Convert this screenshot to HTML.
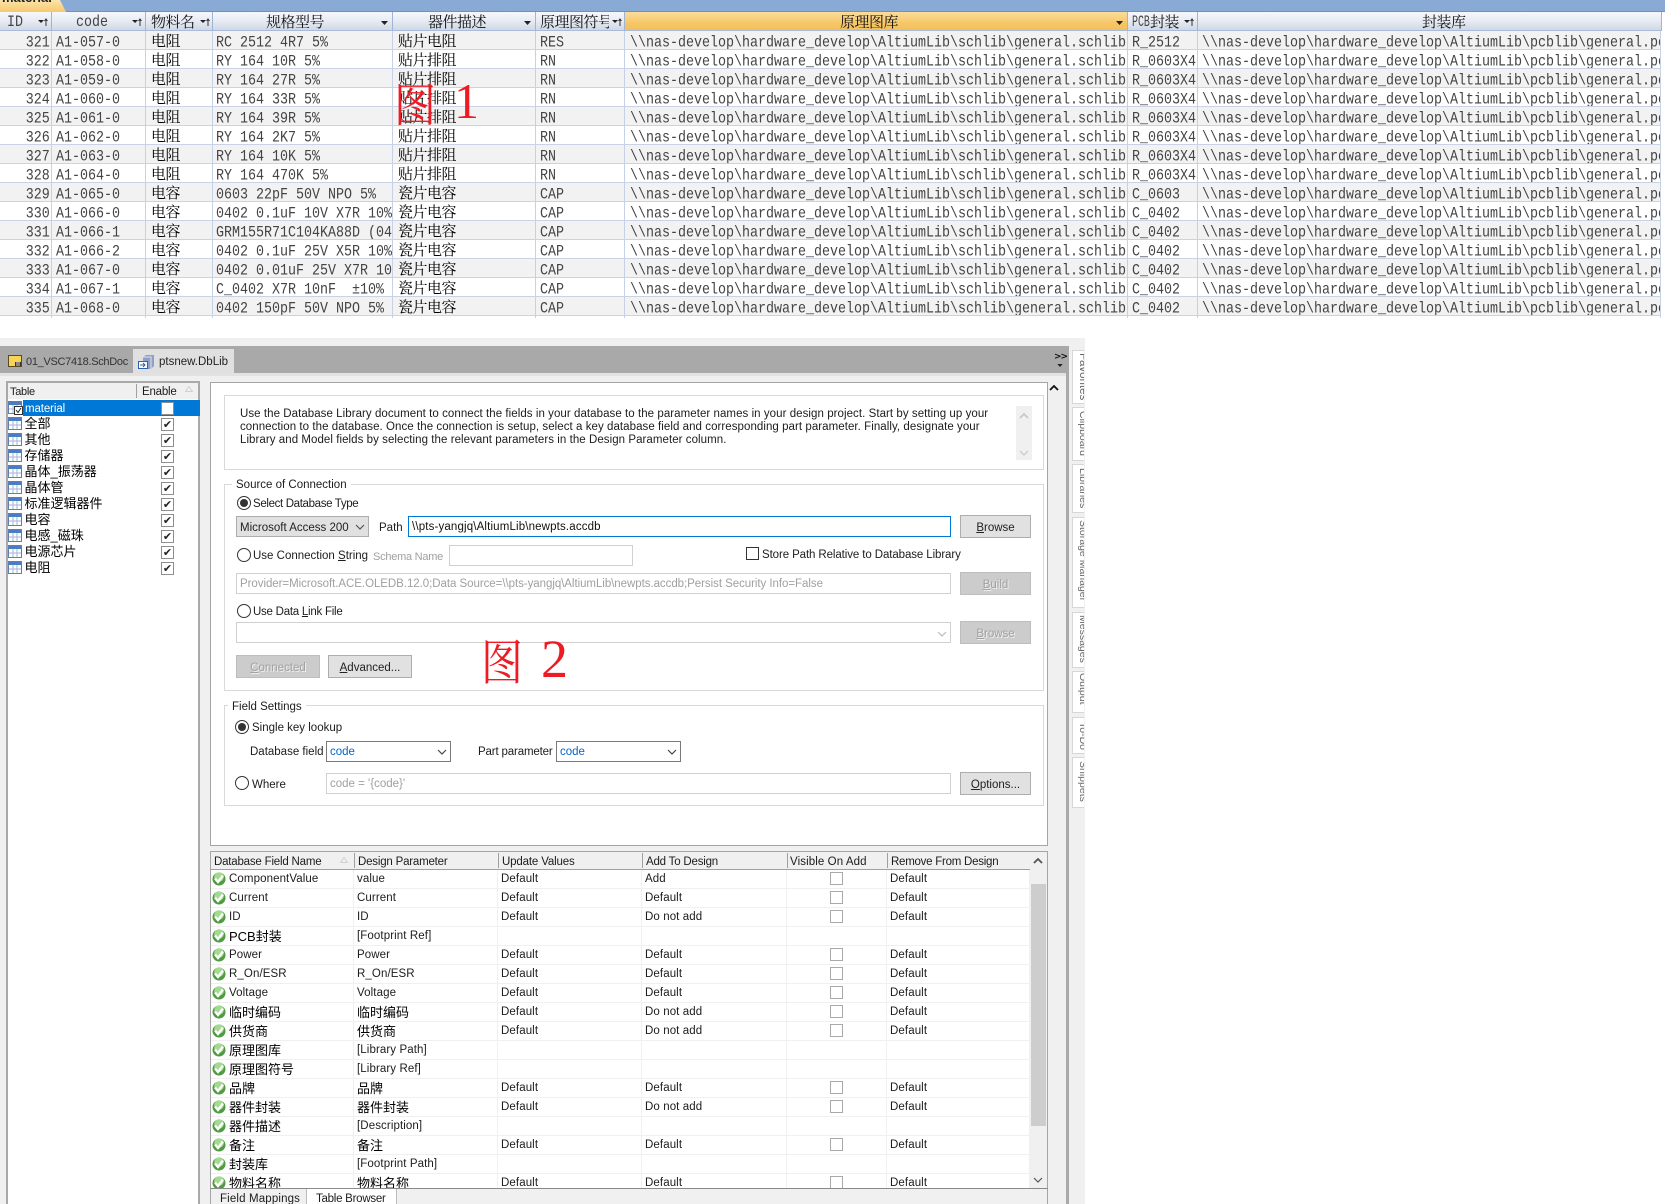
<!DOCTYPE html>
<html><head><meta charset="utf-8"><title>material / ptsnew.DbLib</title>
<style>
html{margin:0;padding:0;background:#fff;overflow:hidden;width:1665px;height:1204px}
body{margin:0;padding:0;background:#fff;position:relative;width:1665px;height:1204px;overflow:hidden;font:11.5px/14px "Liberation Sans","Noto Sans CJK SC",sans-serif;color:#1c1c1c}
div,svg,i{position:absolute}
.t{white-space:pre;margin-top:1px}
.g{color:#a0a0a0}
.cj{font-size:13px;color:#000;margin-top:0}
/* access table */
#top{position:absolute;left:0;top:31px;width:1661px;table-layout:fixed;border-collapse:separate;border-spacing:0;font:16px/19px "Liberation Mono",monospace;color:#444}
#top td{height:18px;padding:0;border-right:1px solid #c5d1e5;border-bottom:1px solid #c9d3e5;overflow:hidden;white-space:pre;line-height:18px}
#top tr:nth-child(odd) td{background:#f2f2f2}
#top tr:nth-child(even) td{background:#fff}
#top tr.z td{background:#fff;height:2px;border-bottom:0;font-size:0;line-height:0}
#top b{display:inline-block;font-weight:normal;transform:translateY(2.5px) scaleX(.8333);transform-origin:0 50%}
#top td.c{font:15px/16px "Noto Serif CJK SC","Liberation Serif",serif;letter-spacing:-.5px;color:#000;height:16px;padding-top:2px}
#top td:nth-child(1){text-align:right;padding-right:1px}
#top td:nth-child(1) b{transform-origin:100% 50%}
#top td:nth-child(2){padding-left:4px}
#top td:nth-child(3){padding-left:5px}
#top td:nth-child(4){padding-left:3px}
#top td:nth-child(5){padding-left:5px}
#top td:nth-child(6){padding-left:4px}
#top td:nth-child(7){padding-left:5px}
#top td:nth-child(8){padding-left:4px}
#top td:nth-child(9){padding-left:4px}
.h{top:12px;height:18px;background:linear-gradient(#f5f7fb,#e9edf4 45%,#cfd8e6);border-right:1px solid #9fb4d6;border-bottom:1px solid #a9bbd8;overflow:hidden}
.h.o{background:linear-gradient(#fbdc9b,#f6c768 60%,#f4bf58)}
.hm{top:12px;font:16px/19px "Liberation Mono",monospace;color:#444;transform:translateY(1px) scaleX(.8333);transform-origin:0 50%;white-space:pre}
.hc{top:12px;font:15px/19px "Noto Serif CJK SC",serif;letter-spacing:-.5px;color:#111;white-space:pre;overflow:hidden}
/* dialog */
.btn{box-sizing:border-box;background:#e1e1e1;border:1px solid #adadad;text-align:center;line-height:25px;color:#222}
.btn.d{background:#cccccc;border-color:#bdbdbd;color:#a2a2a2;text-shadow:1px 1px 0 #eee}
.in{box-sizing:border-box;background:#fff;border:1px solid #d0d0d0;height:21px;line-height:21px;padding-left:3px;white-space:pre;overflow:hidden}
.grp{box-sizing:border-box;border:1px solid #d9d9d9;background:#fff}
.radio{box-sizing:border-box;width:14px;height:14px;border:1px solid #333;border-radius:50%;background:#fff}
.radio.on::after{content:"";position:absolute;left:2px;top:2px;width:8px;height:8px;border-radius:50%;background:#333}
.vt{left:1072px;width:12px;box-sizing:border-box;background:#fff;border:1px solid #d6d6d6;border-right:0;overflow:hidden}
.vt span{position:absolute;left:3px;white-space:pre;writing-mode:vertical-rl;line-height:14px;color:#666;font-size:10.5px}
.ck{left:161px;width:13px;height:13px;box-sizing:border-box;border:1px solid #8f8f8f;background:#fff;font:bold 11px/11px "DejaVu Sans",sans-serif;text-align:center;color:#222;overflow:hidden}
#grid{position:absolute;left:211px;top:870px;width:819px;table-layout:fixed;border-collapse:separate;border-spacing:0}
#grid td{position:relative;height:18px;padding:0 0 0 3px;border-right:1px solid #f0f0f0;border-bottom:1px solid #f0f0f0;white-space:pre;overflow:hidden;line-height:18px;letter-spacing:.1px}
#grid td:first-child{padding-left:18px}
#grid td.k{font-size:13px;letter-spacing:0;color:#000;line-height:15px}
#grid svg{left:1px;top:2px}
#grid td i{left:43px;top:2px;width:13px;height:13px;box-sizing:border-box;border:1px solid #a9a9a9;background:#fff}
.hs{top:853px;height:15px;width:1px;background:#a0a0a0}
</style></head><body>
<svg width="0" height="0" style="left:0;top:0"><defs>
<symbol id="tb" viewBox="0 0 14 13"><rect x=".5" y=".5" width="13" height="12" fill="#fff" stroke="#5b7fb5"/><rect x="1" y="1" width="12" height="3" fill="#4f7cc0"/><path d="M5 4v8M9 4v8M1 8h12" stroke="#9db7da" fill="none"/></symbol>
<symbol id="ok" viewBox="0 0 14 14"><circle cx="7" cy="7" r="6.5" fill="#4f9c40"/><circle cx="7" cy="5" r="4.800" fill="#a4d992"/><path d="M3 6.500l3 3.500 5-6.500" stroke="#fff" stroke-width="2.400" fill="none"/></symbol>
<symbol id="fl" viewBox="0 0 10 9"><path d="M0 2h6L3 5z" fill="#222"/><path d="M8 1v7" stroke="#333"/><path d="M6.5 3L8 1l1.5 2" stroke="#333" fill="none"/></symbol>
<symbol id="dn" viewBox="0 0 7 4"><path d="M0 0h7L3.500 4z" fill="#222"/></symbol>
<symbol id="ch" viewBox="0 0 10 6"><path d="M1 1l4 4 4-4" stroke="currentColor" fill="none" stroke-width="1.200"/></symbol>
<symbol id="up" viewBox="0 0 10 6"><path d="M1 5l4-4 4 4" stroke="currentColor" fill="none" stroke-width="1.800"/></symbol>
</defs></svg>

<!-- Access datasheet -->
<div style="left:0;top:0;width:1665px;height:12px;background:#8aaad6;border-bottom:1px solid #6f8fc5;box-sizing:border-box"></div>
<div style="left:0;top:0;width:66px;height:12px;background:linear-gradient(#fbe3a8,#f7c970);clip-path:polygon(0 0,60px 0,66px 12px,0 12px)"></div>
<div style="left:2px;top:-10px;font:bold 13px/16px 'Liberation Sans',sans-serif;color:#222">material</div>

<div class="h" style="left:0;width:51px"></div>
<div class="h" style="left:52px;width:93px"></div>
<div class="h" style="left:146px;width:66px"></div>
<div class="h" style="left:213px;width:179px"></div>
<div class="h" style="left:393px;width:142px"></div>
<div class="h" style="left:536px;width:88px"></div>
<div class="h o" style="left:625px;width:502px"></div>
<div class="h" style="left:1128px;width:69px"></div>
<div class="h" style="left:1198px;width:463px"></div>
<div class="hm" style="left:7px">ID</div>
<div class="hm" style="left:76px">code</div>
<div class="hc" style="left:151px">物料名</div>
<div class="hc" style="left:266px">规格型号</div>
<div class="hc" style="left:428px">器件描述</div>
<div class="hc" style="left:540px;width:69px">原理图符号</div>
<div class="hc" style="left:840px">原理图库</div>
<div class="hm" style="left:1132px;transform:translateY(1px) scaleX(.62)">PCB</div>
<div class="hc" style="left:1150px;width:33px">封装</div>
<div class="hc" style="left:1422px">封装库</div>
<svg style="left:38px;top:18px" width="10" height="9"><use href="#fl"/></svg>
<svg style="left:132px;top:18px" width="10" height="9"><use href="#fl"/></svg>
<svg style="left:200px;top:18px" width="10" height="9"><use href="#fl"/></svg>
<svg style="left:381px;top:21px" width="7" height="4"><use href="#dn"/></svg>
<svg style="left:524px;top:21px" width="7" height="4"><use href="#dn"/></svg>
<svg style="left:612px;top:18px" width="10" height="9"><use href="#fl"/></svg>
<svg style="left:1116px;top:21px" width="7" height="4"><use href="#dn"/></svg>
<svg style="left:1184px;top:18px" width="10" height="9"><use href="#fl"/></svg>

<table id="top"><colgroup><col style="width:52px"><col style="width:94px"><col style="width:67px"><col style="width:180px"><col style="width:143px"><col style="width:89px"><col style="width:503px"><col style="width:70px"><col style="width:463px"></colgroup>
<tr><td><b>321</b></td><td><b>A1-057-0</b></td><td class="c">电阻</td><td><b>RC 2512 4R7 5%</b></td><td class="c">贴片电阻</td><td><b>RES</b></td><td><b>\\nas-develop\hardware_develop\AltiumLib\schlib\general.schlib</b></td><td><b>R_2512</b></td><td><b>\\nas-develop\hardware_develop\AltiumLib\pcblib\general.pcblib</b></td></tr>
<tr><td><b>322</b></td><td><b>A1-058-0</b></td><td class="c">电阻</td><td><b>RY 164 10R 5%</b></td><td class="c">贴片排阻</td><td><b>RN</b></td><td><b>\\nas-develop\hardware_develop\AltiumLib\schlib\general.schlib</b></td><td><b>R_0603X4</b></td><td><b>\\nas-develop\hardware_develop\AltiumLib\pcblib\general.pcblib</b></td></tr>
<tr><td><b>323</b></td><td><b>A1-059-0</b></td><td class="c">电阻</td><td><b>RY 164 27R 5%</b></td><td class="c">贴片排阻</td><td><b>RN</b></td><td><b>\\nas-develop\hardware_develop\AltiumLib\schlib\general.schlib</b></td><td><b>R_0603X4</b></td><td><b>\\nas-develop\hardware_develop\AltiumLib\pcblib\general.pcblib</b></td></tr>
<tr><td><b>324</b></td><td><b>A1-060-0</b></td><td class="c">电阻</td><td><b>RY 164 33R 5%</b></td><td class="c">贴片排阻</td><td><b>RN</b></td><td><b>\\nas-develop\hardware_develop\AltiumLib\schlib\general.schlib</b></td><td><b>R_0603X4</b></td><td><b>\\nas-develop\hardware_develop\AltiumLib\pcblib\general.pcblib</b></td></tr>
<tr><td><b>325</b></td><td><b>A1-061-0</b></td><td class="c">电阻</td><td><b>RY 164 39R 5%</b></td><td class="c">贴片排阻</td><td><b>RN</b></td><td><b>\\nas-develop\hardware_develop\AltiumLib\schlib\general.schlib</b></td><td><b>R_0603X4</b></td><td><b>\\nas-develop\hardware_develop\AltiumLib\pcblib\general.pcblib</b></td></tr>
<tr><td><b>326</b></td><td><b>A1-062-0</b></td><td class="c">电阻</td><td><b>RY 164 2K7 5%</b></td><td class="c">贴片排阻</td><td><b>RN</b></td><td><b>\\nas-develop\hardware_develop\AltiumLib\schlib\general.schlib</b></td><td><b>R_0603X4</b></td><td><b>\\nas-develop\hardware_develop\AltiumLib\pcblib\general.pcblib</b></td></tr>
<tr><td><b>327</b></td><td><b>A1-063-0</b></td><td class="c">电阻</td><td><b>RY 164 10K 5%</b></td><td class="c">贴片排阻</td><td><b>RN</b></td><td><b>\\nas-develop\hardware_develop\AltiumLib\schlib\general.schlib</b></td><td><b>R_0603X4</b></td><td><b>\\nas-develop\hardware_develop\AltiumLib\pcblib\general.pcblib</b></td></tr>
<tr><td><b>328</b></td><td><b>A1-064-0</b></td><td class="c">电阻</td><td><b>RY 164 470K 5%</b></td><td class="c">贴片排阻</td><td><b>RN</b></td><td><b>\\nas-develop\hardware_develop\AltiumLib\schlib\general.schlib</b></td><td><b>R_0603X4</b></td><td><b>\\nas-develop\hardware_develop\AltiumLib\pcblib\general.pcblib</b></td></tr>
<tr><td><b>329</b></td><td><b>A1-065-0</b></td><td class="c">电容</td><td><b>0603 22pF 50V NPO 5%</b></td><td class="c">瓷片电容</td><td><b>CAP</b></td><td><b>\\nas-develop\hardware_develop\AltiumLib\schlib\general.schlib</b></td><td><b>C_0603</b></td><td><b>\\nas-develop\hardware_develop\AltiumLib\pcblib\general.pcblib</b></td></tr>
<tr><td><b>330</b></td><td><b>A1-066-0</b></td><td class="c">电容</td><td><b>0402 0.1uF 10V X7R 10%</b></td><td class="c">瓷片电容</td><td><b>CAP</b></td><td><b>\\nas-develop\hardware_develop\AltiumLib\schlib\general.schlib</b></td><td><b>C_0402</b></td><td><b>\\nas-develop\hardware_develop\AltiumLib\pcblib\general.pcblib</b></td></tr>
<tr><td><b>331</b></td><td><b>A1-066-1</b></td><td class="c">电容</td><td><b>GRM155R71C104KA88D (0402 X7R)</b></td><td class="c">瓷片电容</td><td><b>CAP</b></td><td><b>\\nas-develop\hardware_develop\AltiumLib\schlib\general.schlib</b></td><td><b>C_0402</b></td><td><b>\\nas-develop\hardware_develop\AltiumLib\pcblib\general.pcblib</b></td></tr>
<tr><td><b>332</b></td><td><b>A1-066-2</b></td><td class="c">电容</td><td><b>0402 0.1uF 25V X5R 10%</b></td><td class="c">瓷片电容</td><td><b>CAP</b></td><td><b>\\nas-develop\hardware_develop\AltiumLib\schlib\general.schlib</b></td><td><b>C_0402</b></td><td><b>\\nas-develop\hardware_develop\AltiumLib\pcblib\general.pcblib</b></td></tr>
<tr><td><b>333</b></td><td><b>A1-067-0</b></td><td class="c">电容</td><td><b>0402 0.01uF 25V X7R 10%</b></td><td class="c">瓷片电容</td><td><b>CAP</b></td><td><b>\\nas-develop\hardware_develop\AltiumLib\schlib\general.schlib</b></td><td><b>C_0402</b></td><td><b>\\nas-develop\hardware_develop\AltiumLib\pcblib\general.pcblib</b></td></tr>
<tr><td><b>334</b></td><td><b>A1-067-1</b></td><td class="c">电容</td><td><b>C_0402 X7R 10nF  ±10%</b></td><td class="c">瓷片电容</td><td><b>CAP</b></td><td><b>\\nas-develop\hardware_develop\AltiumLib\schlib\general.schlib</b></td><td><b>C_0402</b></td><td><b>\\nas-develop\hardware_develop\AltiumLib\pcblib\general.pcblib</b></td></tr>
<tr><td><b>335</b></td><td><b>A1-068-0</b></td><td class="c">电容</td><td><b>0402 150pF 50V NPO 5%</b></td><td class="c">瓷片电容</td><td><b>CAP</b></td><td><b>\\nas-develop\hardware_develop\AltiumLib\schlib\general.schlib</b></td><td><b>C_0402</b></td><td><b>\\nas-develop\hardware_develop\AltiumLib\pcblib\general.pcblib</b></td></tr>
<tr class="z"><td></td><td></td><td></td><td></td><td></td><td></td><td></td><td></td><td></td></tr>
</table>

<div style="left:394px;top:73px;font:42px/54px 'Noto Serif CJK SC',serif;color:#ed1c24;transform:scaleY(1.1);transform-origin:0 0">图</div>
<div style="left:454px;top:72px;font:50px/58px 'Liberation Serif',serif;color:#ed1c24">1</div>

<!-- Altium panel -->
<div style="left:0;top:338px;width:1085px;height:866px;background:#f0f0f0"></div>
<div style="left:0;top:346px;width:1067px;height:27px;background:#a9a9a9"></div>
<div style="left:0;top:373px;width:1067px;height:3px;background:#e2e2e2"></div>
<div style="left:1066px;top:346px;width:3px;height:858px;background:#a9a9a9"></div>
<div style="left:133px;top:349px;width:101px;height:24px;background:#e0e0e0"></div>
<svg style="left:8px;top:355px" width="14" height="12" viewBox="0 0 14 12"><rect x=".5" y=".5" width="13" height="11" fill="#f7d358" stroke="#5a4a20"/><rect x="7" y="7" width="6" height="4" fill="#333"/><path d="M8 8h4M8 10h4" stroke="#ddd"/></svg>
<div class="t" style="left:26px;top:354px;color:#333;font-size:11px;letter-spacing:-.3px">01_VSC7418.SchDoc</div>
<svg style="left:138px;top:354px" width="17" height="16" viewBox="0 0 17 16"><path d="M5 3l3-2h8v11l-3 3H5z" fill="#8f9fc6"/><path d="M5 3h8v12" fill="none" stroke="#dfe4f0"/><rect x=".5" y="7.500" width="9" height="7" fill="#fff" stroke="#2d5fae"/><path d="M2 11h5M5 9l2 2-2 2" stroke="#2d5fae" fill="none"/></svg>
<div class="t" style="left:159px;top:354px;color:#222">ptsnew.DbLib</div>
<div style="left:1054px;top:352px;font:bold 9px/10px 'DejaVu Sans',sans-serif;color:#111;letter-spacing:-1px">&gt;&gt;</div>
<svg style="left:1057px;top:364px" width="6" height="3"><use href="#dn"/></svg>

<!-- left table list -->
<div style="left:6px;top:381px;width:194px;height:823px;box-sizing:border-box;border:2px solid #a9a9a9;border-bottom:0;background:#fff"></div>
<div style="left:8px;top:383px;width:190px;height:16px;background:#f0f0f0"></div>
<div style="left:136px;top:384px;width:1px;height:14px;background:#a0a0a0"></div>
<div class="t" style="left:10px;top:384px;font-size:11px;letter-spacing:-.3px">Table</div>
<div class="t" style="left:142px;top:384px;letter-spacing:-.2px">Enable</div>
<svg style="left:185px;top:386px" width="8" height="6" viewBox="0 0 8 6"><path d="M4 0.500L7.500 5.500H.5z" fill="none" stroke="#d0d0d0"/></svg>
<div style="left:23px;top:400px;width:177px;height:16px;background:#0078d7"></div>
<svg style="left:8px;top:401px" width="14" height="13"><use href="#tb"/></svg>
<svg style="left:8px;top:417px" width="14" height="13"><use href="#tb"/></svg>
<svg style="left:8px;top:433px" width="14" height="13"><use href="#tb"/></svg>
<svg style="left:8px;top:449px" width="14" height="13"><use href="#tb"/></svg>
<svg style="left:8px;top:465px" width="14" height="13"><use href="#tb"/></svg>
<svg style="left:8px;top:481px" width="14" height="13"><use href="#tb"/></svg>
<svg style="left:8px;top:497px" width="14" height="13"><use href="#tb"/></svg>
<svg style="left:8px;top:513px" width="14" height="13"><use href="#tb"/></svg>
<svg style="left:8px;top:529px" width="14" height="13"><use href="#tb"/></svg>
<svg style="left:8px;top:545px" width="14" height="13"><use href="#tb"/></svg>
<svg style="left:8px;top:561px" width="14" height="13"><use href="#tb"/></svg>
<svg style="left:14px;top:406px" width="9" height="9" viewBox="0 0 9 9"><rect x=".5" y=".5" width="8" height="8" fill="#fff" stroke="#333"/><path d="M2 4l2 2.500L7 2" stroke="#222" fill="none"/></svg>
<div class="t" style="left:25px;top:401px;color:#fff;letter-spacing:-.1px">material</div>
<div class="t cj" style="left:24.500px;top:417px">全部</div>
<div class="t cj" style="left:24.500px;top:433px">其他</div>
<div class="t cj" style="left:24.500px;top:449px">存储器</div>
<div class="t cj" style="left:24.500px;top:465px">晶体_振荡器</div>
<div class="t cj" style="left:24.500px;top:481px">晶体管</div>
<div class="t cj" style="left:24.500px;top:497px">标准逻辑器件</div>
<div class="t cj" style="left:24.500px;top:513px">电容</div>
<div class="t cj" style="left:24.500px;top:529px">电感_磁珠</div>
<div class="t cj" style="left:24.500px;top:545px">电源芯片</div>
<div class="t cj" style="left:24.500px;top:561px">电阻</div>
<div class="ck" style="top:402px"></div>
<div class="ck" style="top:418px">✔</div>
<div class="ck" style="top:434px">✔</div>
<div class="ck" style="top:450px">✔</div>
<div class="ck" style="top:466px">✔</div>
<div class="ck" style="top:482px">✔</div>
<div class="ck" style="top:498px">✔</div>
<div class="ck" style="top:514px">✔</div>
<div class="ck" style="top:530px">✔</div>
<div class="ck" style="top:546px">✔</div>
<div class="ck" style="top:562px">✔</div>

<!-- main config panel -->
<div style="left:210px;top:382px;width:838px;height:464px;box-sizing:border-box;border:1px solid #a5a5a5;background:#fff"></div>
<svg style="left:1049px;top:385px;color:#111" width="10" height="6"><use href="#up"/></svg>

<div class="grp" style="left:224px;top:395px;width:820px;height:75px"></div>
<div class="t" style="left:240px;top:406px;letter-spacing:.055px">Use the Database Library document to connect the fields in your database to the parameter names in your design project. Start by setting up your</div>
<div class="t" style="left:240px;top:419px;letter-spacing:.055px">connection to the database. Once the connection is setup, select a key database field and corresponding part parameter. Finally, designate your</div>
<div class="t" style="left:240px;top:432px;letter-spacing:.055px">Library and Model fields by selecting the relevant parameters in the Design Parameter column.</div>
<div style="left:1016px;top:406px;width:16px;height:54px;background:#f0f0f0"></div>
<svg style="left:1019px;top:413px;color:#c8c8c8" width="10" height="6"><use href="#up"/></svg>
<svg style="left:1019px;top:450px;color:#c8c8c8" width="10" height="6"><use href="#ch"/></svg>

<div class="grp" style="left:224px;top:484px;width:820px;height:207px"></div>
<div class="t" style="left:232px;top:477px;background:#fff;padding:0 4px">Source of Connection</div>
<div class="radio on" style="left:237px;top:496px"></div>
<div class="t" style="left:253px;top:496px;letter-spacing:-.35px">Select Database Type</div>
<div class="btn" style="left:236px;top:516px;width:133px;height:21px;text-align:left;padding-left:4px;line-height:22px;overflow:hidden"><span style="position:absolute;left:3px;top:0;width:109px;overflow:hidden;white-space:pre">Microsoft Access 2007</span></div>
<svg style="left:355px;top:524px;color:#555" width="10" height="6"><use href="#ch"/></svg>
<div class="t" style="left:379px;top:520px">Path</div>
<div class="in" style="left:408px;top:516px;width:543px;border-color:#0078d7;color:#111;letter-spacing:.15px">\\pts-yangjq\AltiumLib\newpts.accdb</div>
<div class="btn" style="left:960px;top:515px;width:71px;height:23px"><u>B</u>rowse</div>

<div class="radio" style="left:237px;top:548px"></div>
<div class="t" style="left:253px;top:548px">Use Connection <u>S</u>tring</div>
<div class="t g" style="left:373px;top:549px;font-size:11px;letter-spacing:-.25px">Schema Name</div>
<div class="in" style="left:449px;top:545px;width:184px"></div>
<div style="left:746px;top:547px;width:13px;height:13px;box-sizing:border-box;border:1px solid #333;background:#fff"></div>
<div class="t" style="left:762px;top:547px;letter-spacing:-.1px">Store Path Relative to Database Library</div>
<div class="in g" style="left:236px;top:573px;width:715px;letter-spacing:-.05px">Provider=Microsoft.ACE.OLEDB.12.0;Data Source=\\pts-yangjq\AltiumLib\newpts.accdb;Persist Security Info=False</div>
<div class="btn d" style="left:960px;top:572px;width:71px;height:23px"><u>B</u>uild</div>

<div class="radio" style="left:237px;top:604px"></div>
<div class="t" style="left:253px;top:604px;letter-spacing:-.25px">Use Data <u>L</u>ink File</div>
<div class="in" style="left:236px;top:622px;width:715px"></div>
<svg style="left:937px;top:631px;color:#bbb" width="10" height="6"><use href="#ch"/></svg>
<div class="btn d" style="left:960px;top:621px;width:71px;height:23px"><u>B</u>rowse</div>
<div class="btn d" style="left:236px;top:655px;width:84px;height:23px"><u>C</u>onnected</div>
<div class="btn" style="left:328px;top:655px;width:84px;height:23px"><u>A</u>dvanced...</div>

<div style="left:481px;top:629px;font:42px/54px 'Noto Serif CJK SC',serif;color:#ed1c24;transform:scaleY(1.15);transform-origin:0 0">图</div>
<div style="left:541px;top:629px;font:54px/60px 'Liberation Serif',serif;color:#ed1c24">2</div>

<div class="grp" style="left:224px;top:705px;width:820px;height:101px"></div>
<div class="t" style="left:228px;top:699px;background:#fff;padding:0 4px">Field Settings</div>
<div class="radio on" style="left:235px;top:720px"></div>
<div class="t" style="left:252px;top:720px">Single key lookup</div>
<div class="t" style="left:250px;top:744px">Database field</div>
<div class="in" style="left:326px;top:741px;width:125px;border-color:#7a7a7a;color:#0066cc;line-height:20px">code</div>
<svg style="left:437px;top:749px;color:#444" width="10" height="6"><use href="#ch"/></svg>
<div class="t" style="left:478px;top:744px;letter-spacing:-.15px">Part parameter</div>
<div class="in" style="left:556px;top:741px;width:125px;border-color:#7a7a7a;color:#0066cc;line-height:20px">code</div>
<svg style="left:667px;top:749px;color:#444" width="10" height="6"><use href="#ch"/></svg>
<div class="radio" style="left:235px;top:776px"></div>
<div class="t" style="left:252px;top:777px">Where</div>
<div class="in g" style="left:326px;top:773px;width:625px">code = '{code}'</div>
<div class="btn" style="left:960px;top:772px;width:71px;height:23px"><u>O</u>ptions...</div>

<!-- field grid -->
<div style="left:210px;top:851px;width:838px;height:338px;box-sizing:border-box;border:1px solid #a5a5a5;background:#fff"></div>
<div style="left:211px;top:852px;width:819px;height:17px;background:#f0f0f0;border-bottom:1px solid #a0a0a0"></div>
<div class="hs" style="left:354px"></div><div class="hs" style="left:498px"></div><div class="hs" style="left:642px"></div><div class="hs" style="left:787px"></div><div class="hs" style="left:887px"></div>
<div class="t" style="left:214px;top:854px;letter-spacing:-.2px">Database Field Name</div>
<svg style="left:340px;top:857px" width="8" height="6" viewBox="0 0 8 6"><path d="M4 0.500L7.500 5.500H.5z" fill="none" stroke="#d0d0d0"/></svg>
<div class="t" style="left:358px;top:854px;letter-spacing:-.2px">Design Parameter</div>
<div class="t" style="left:502px;top:854px;letter-spacing:-.15px">Update Values</div>
<div class="t" style="left:646px;top:854px;letter-spacing:-.2px">Add To Design</div>
<div class="t" style="left:790px;top:854px;letter-spacing:.1px">Visible On Add</div>
<div class="t" style="left:891px;top:854px;letter-spacing:-.25px">Remove From Design</div>

<div style="left:211px;top:870px;width:819px;height:318px;overflow:hidden">
<table id="grid" style="left:0;top:0"><colgroup><col style="width:143px"><col style="width:144px"><col style="width:144px"><col style="width:145px"><col style="width:100px"><col style="width:143px"></colgroup>
<tr><td><svg width="14" height="14"><use href="#ok"/></svg>ComponentValue</td><td>value</td><td>Default</td><td>Add</td><td><i></i></td><td>Default</td></tr>
<tr><td><svg width="14" height="14"><use href="#ok"/></svg>Current</td><td>Current</td><td>Default</td><td>Default</td><td><i></i></td><td>Default</td></tr>
<tr><td><svg width="14" height="14"><use href="#ok"/></svg>ID</td><td>ID</td><td>Default</td><td>Do not add</td><td><i></i></td><td>Default</td></tr>
<tr><td class="k"><svg width="14" height="14"><use href="#ok"/></svg>PCB封装</td><td>[Footprint Ref]</td><td></td><td></td><td></td><td></td></tr>
<tr><td><svg width="14" height="14"><use href="#ok"/></svg>Power</td><td>Power</td><td>Default</td><td>Default</td><td><i></i></td><td>Default</td></tr>
<tr><td><svg width="14" height="14"><use href="#ok"/></svg>R_On/ESR</td><td>R_On/ESR</td><td>Default</td><td>Default</td><td><i></i></td><td>Default</td></tr>
<tr><td><svg width="14" height="14"><use href="#ok"/></svg>Voltage</td><td>Voltage</td><td>Default</td><td>Default</td><td><i></i></td><td>Default</td></tr>
<tr><td class="k"><svg width="14" height="14"><use href="#ok"/></svg>临时编码</td><td class="k">临时编码</td><td>Default</td><td>Do not add</td><td><i></i></td><td>Default</td></tr>
<tr><td class="k"><svg width="14" height="14"><use href="#ok"/></svg>供货商</td><td class="k">供货商</td><td>Default</td><td>Do not add</td><td><i></i></td><td>Default</td></tr>
<tr><td class="k"><svg width="14" height="14"><use href="#ok"/></svg>原理图库</td><td>[Library Path]</td><td></td><td></td><td></td><td></td></tr>
<tr><td class="k"><svg width="14" height="14"><use href="#ok"/></svg>原理图符号</td><td>[Library Ref]</td><td></td><td></td><td></td><td></td></tr>
<tr><td class="k"><svg width="14" height="14"><use href="#ok"/></svg>品牌</td><td class="k">品牌</td><td>Default</td><td>Default</td><td><i></i></td><td>Default</td></tr>
<tr><td class="k"><svg width="14" height="14"><use href="#ok"/></svg>器件封装</td><td class="k">器件封装</td><td>Default</td><td>Do not add</td><td><i></i></td><td>Default</td></tr>
<tr><td class="k"><svg width="14" height="14"><use href="#ok"/></svg>器件描述</td><td>[Description]</td><td></td><td></td><td></td><td></td></tr>
<tr><td class="k"><svg width="14" height="14"><use href="#ok"/></svg>备注</td><td class="k">备注</td><td>Default</td><td>Default</td><td><i></i></td><td>Default</td></tr>
<tr><td class="k"><svg width="14" height="14"><use href="#ok"/></svg>封装库</td><td>[Footprint Path]</td><td></td><td></td><td></td><td></td></tr>
<tr><td class="k"><svg width="14" height="14"><use href="#ok"/></svg>物料名称</td><td class="k">物料名称</td><td>Default</td><td>Default</td><td><i></i></td><td>Default</td></tr>
</table></div>
<div style="left:1030px;top:852px;width:17px;height:336px;background:#f0f0f0"></div>
<svg style="left:1033px;top:858px;color:#555" width="10" height="6"><use href="#up"/></svg>
<div style="left:1031px;top:884px;width:15px;height:242px;background:#cdcdcd"></div>
<svg style="left:1033px;top:1177px;color:#555" width="10" height="6"><use href="#ch"/></svg>

<div style="left:210px;top:1188px;width:838px;height:16px;background:#f0f0f0;border-top:1px solid #8a8a8a;box-sizing:border-box"></div>
<div style="left:210px;top:1189px;width:1px;height:15px;background:#a5a5a5"></div>
<div style="left:1047px;top:1189px;width:1px;height:15px;background:#a5a5a5"></div>
<div style="left:306px;top:1189px;width:91px;height:15px;background:#fff;border-left:1px solid #bbb;border-right:1px solid #bbb;box-sizing:border-box"></div>
<div class="t" style="left:220px;top:1191px;letter-spacing:.15px">Field Mappings</div>
<div class="t" style="left:316px;top:1191px;letter-spacing:-.25px">Table Browser</div>

<!-- right side tabs -->
<div class="vt" style="top:350px;height:54px"><span style="top:2px;font-size:11.5px">Favorites</span></div>
<div class="vt" style="top:407px;height:54px"><span style="top:3px">Clipboard</span></div>
<div class="vt" style="top:464px;height:49px"><span style="top:3px">Libraries</span></div>
<div class="vt" style="top:517px;height:91px"><span style="top:2px">Storage Manager</span></div>
<div class="vt" style="top:612px;height:56px"><span style="top:2px">Messages</span></div>
<div class="vt" style="top:671px;height:42px"><span style="top:1px">Output</span></div>
<div class="vt" style="top:717px;height:37px"><span style="top:4px">To-Do</span></div>
<div class="vt" style="top:757px;height:51px"><span style="top:3px">Snippets</span></div>
</body></html>
